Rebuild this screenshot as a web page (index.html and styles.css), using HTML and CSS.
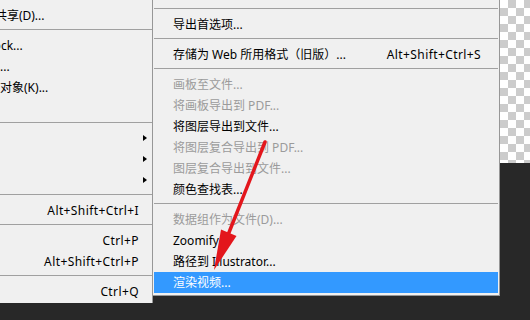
FILE: index.html
```html
<!DOCTYPE html>
<html lang="zh-CN">
<head>
<meta charset="utf-8">
<title>导出菜单</title>
<link rel="stylesheet" href="styles.css">
</head>
<body>
<div class="screen">
  <div class="menu menu-file">
    <div class="tail"></div>
    <div class="item"><span class="label">在 Behance 上共享(D)...</span></div>
    <div class="sep"></div>
    <div class="item"><span class="label">搜索 Adobe Stock...</span></div>
    <div class="item"><span class="label">置入嵌入的对象...</span></div>
    <div class="item"><span class="label">置入链接的智能对象(K)...</span></div>
    <div class="item"><span class="label">打包...</span></div>
    <div class="sep"></div>
    <div class="item sub"><span class="label">自动</span><span class="caret"></span></div>
    <div class="item sub"><span class="label">脚本</span><span class="caret"></span></div>
    <div class="item sub"><span class="label">导入</span><span class="caret"></span></div>
    <div class="sep"></div>
    <div class="item"><span class="label">文件简介...</span><span class="key">Alt+Shift+Ctrl+I</span></div>
    <div class="sep"></div>
    <div class="item"><span class="label">打印...</span><span class="key">Ctrl+P</span></div>
    <div class="item"><span class="label">打印一份</span><span class="key">Alt+Shift+Ctrl+P</span></div>
    <div class="sep"></div>
    <div class="item"><span class="label">退出</span><span class="key">Ctrl+Q</span></div>
  </div>

  <div class="menu menu-export">
    <div class="tail"></div>
    <div class="sep"></div>
    <div class="item"><span class="label">导出首选项...</span></div>
    <div class="sep"></div>
    <div class="item"><span class="label">存储为 Web 所用格式（旧版）...</span><span class="key">Alt+Shift+Ctrl+S</span></div>
    <div class="sep"></div>
    <div class="item off"><span class="label">画板至文件...</span></div>
    <div class="item off"><span class="label">将画板导出到 PDF...</span></div>
    <div class="item"><span class="label">将图层导出到文件...</span></div>
    <div class="item off"><span class="label">将图层复合导出到 PDF...</span></div>
    <div class="item off"><span class="label">图层复合导出到文件...</span></div>
    <div class="item"><span class="label">颜色查找表...</span></div>
    <div class="sep"></div>
    <div class="item off"><span class="label">数据组作为文件(D)...</span></div>
    <div class="item"><span class="label">Zoomify...</span></div>
    <div class="item"><span class="label">路径到 Illustrator...</span></div>
    <div class="item active"><span class="label">渲染视频...</span></div>
  </div>

  <div class="strip">
    <div class="checker"></div>
  </div>

  <svg class="arrow" width="530" height="320" viewBox="0 0 530 320" aria-hidden="true">
    <line x1="265" y1="142" x2="226" y2="240" stroke="#e3161c" stroke-width="3.5" stroke-linecap="round"/>
    <polygon points="214,270 236.5,236 221,229.5" fill="#e3161c"/>
  </svg>
</div>
</body>
</html>
```

FILE: styles.css
```css
* { box-sizing: border-box; }

html, body {
  margin: 0;
  padding: 0;
  background: #282828;
  overflow: hidden;
}

.screen {
  position: relative;
  width: 530px;
  height: 320px;
  overflow: hidden;
  display: flex;
  align-items: flex-start;
  background: #282828;
  font-family: "Noto Sans", "Noto Sans CJK SC", sans-serif;
  font-size: 12px;
  color: #000;
}

.menu {
  background: #f0f0f0;
  flex: none;
}

.menu-file {
  width: 263px;
  margin-left: -110px;
  height: 303px;
  border-right: 1px solid #979797;
}

.menu-export {
  width: 347px;
  height: 296px;
  border-right: 1px solid #979797;
  border-bottom: 1px solid #979797;
  padding: 0 1px 0 1px;
}

.tail { height: 5px; }

.item {
  height: 21px;
  line-height: 21px;
  display: flex;
  align-items: center;
  white-space: nowrap;
  position: relative;
}

.menu-file .item {
  padding-left: 26px;
  padding-right: 13px;
}

.menu-export .item {
  padding-left: 19px;
  padding-right: 17px;
}

.label { flex: 1; }

.key {
  flex: none;
  letter-spacing: 0.4px;
}

.off { color: #9b9b9b; }

.active {
  background: #3399ff;
  color: #fff;
}

.caret {
  position: absolute;
  right: 5px;
  top: 7px;
  width: 0;
  height: 0;
  border-top: 3.5px solid transparent;
  border-bottom: 3.5px solid transparent;
  border-left: 4px solid #000;
}

.sep {
  height: 9px;
  padding-top: 3px;
}

.sep::before {
  content: "";
  display: block;
  height: 1px;
  background: #a0a0a0;
}

.strip {
  width: 30px;
  flex: none;
}

.checker {
  height: 163px;
  background: repeating-conic-gradient(#cccccc 0 25%, #ffffff 0 50%) 0 0 / 16px 16px;
}

.arrow {
  position: absolute;
  left: 0;
  top: 0;
  pointer-events: none;
}
```
